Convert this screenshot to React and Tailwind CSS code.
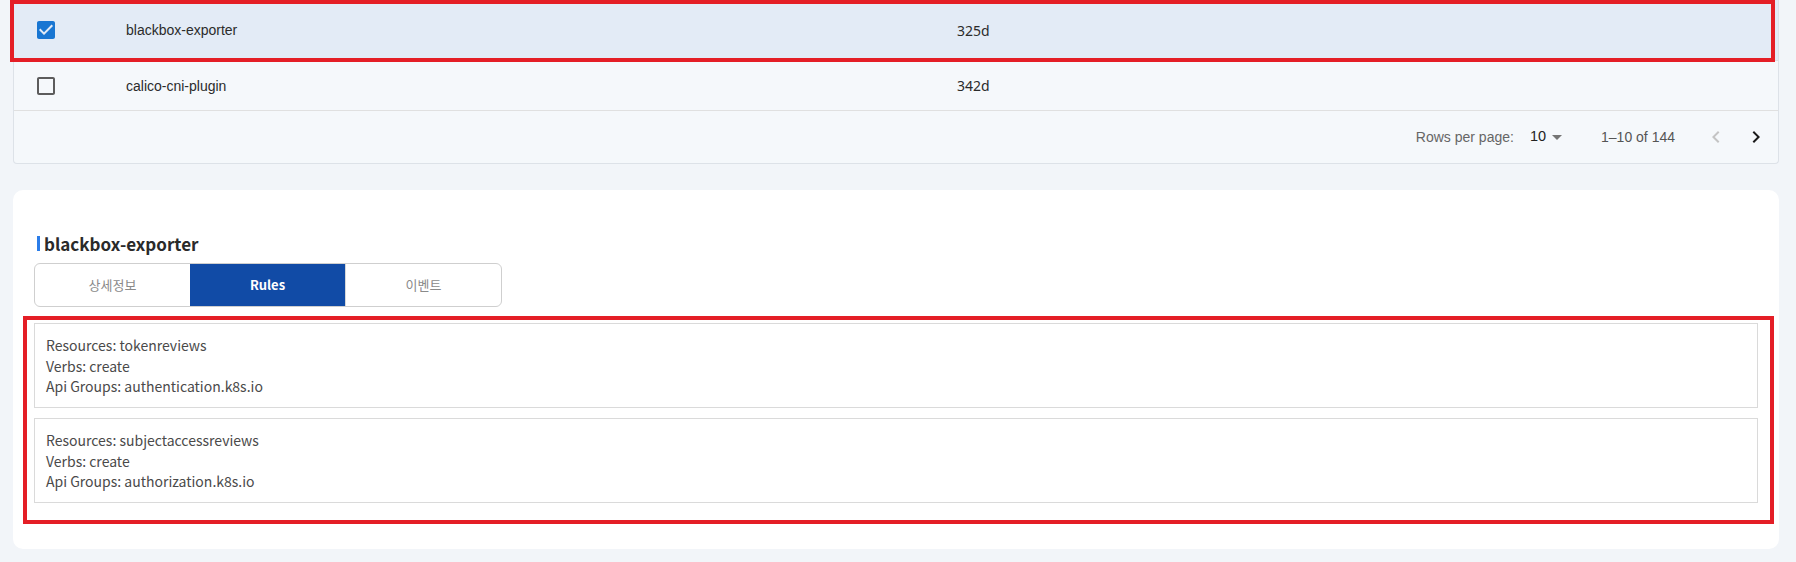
import React from "react";

const rows = [
  { name: "blackbox-exporter", age: "325d", checked: true },
  { name: "calico-cni-plugin", age: "342d", checked: false },
];

const rules = [
  { resources: "tokenreviews", verbs: "create", groups: "authentication.k8s.io" },
  { resources: "subjectaccessreviews", verbs: "create", groups: "authorization.k8s.io" },
];

function CheckBox({ checked }) {
  return checked ? (
    <svg viewBox="0 0 24 24" className="w-6 h-6 fill-[#1976d2]">
      <path d="M19 3H5c-1.11 0-2 .9-2 2v14c0 1.1.89 2 2 2h14c1.11 0 2-.9 2-2V5c0-1.1-.89-2-2-2zm-9 14l-5-5 1.41-1.41L10 14.17l7.59-7.59L19 8l-9 9z" />
    </svg>
  ) : (
    <svg viewBox="0 0 24 24" className="w-6 h-6 fill-[#5c5c5c]">
      <path d="M19 5v14H5V5h14m0-2H5c-1.1 0-2 .9-2 2v14c0 1.1.9 2 2 2h14c1.1 0 2-.9 2-2V5c0-1.1-.9-2-2-2z" />
    </svg>
  );
}

export default function App() {
  return (
    <div className="w-full h-[562px] overflow-hidden bg-[#f2f5f9] pl-[13px] pr-[17px] font-['Liberation_Sans',Arial,sans-serif]">
      <div className="relative">
        {/* table */}
        <div className="border-x border-b border-[#dde2e8] rounded-b-[4px] bg-[#f5f8fb]">
          {rows.map((r) => (
            <div
              key={r.name}
              className={`flex items-center border-b border-[#e0e0e0] ${r.checked ? "h-[61px] bg-[#e3ebf6]" : "h-[50px]"}`}
            >
              <div className="w-[112px] pl-[20px] flex items-center">
                <CheckBox checked={r.checked} />
              </div>
              <div className="w-[831px] text-[14px] text-[#2b2b2b] pt-[1px]">{r.name}</div>
              <div className="text-[14px] text-[#2b2b2b] font-['Noto_Sans',sans-serif]">{r.age}</div>
            </div>
          ))}
          <div className="h-[52px] flex items-center justify-end pr-[2px] text-[14px]">
            <span className="text-[#666]">Rows per page:</span>
            <div className="ml-[16px] flex items-center">
              <span className="text-[#222] text-[14.5px]">10</span>
              <svg viewBox="0 0 24 24" className="w-6 h-6 fill-[#757575] -ml-[1px]">
                <path d="M7 10l5 5 5-5z" />
              </svg>
            </div>
            <span className="ml-[32px] text-[#555]">1–10 of 144</span>
            <div className="ml-[21px] flex">
              <div className="w-10 h-10 flex items-center justify-center">
                <svg viewBox="0 0 24 24" className="w-6 h-6 fill-[#c4c4c4]">
                  <path d="M15.41 16.59L10.83 12l4.58-4.59L14 6l-6 6 6 6 1.41-1.41z" />
                </svg>
              </div>
              <div className="w-10 h-10 flex items-center justify-center">
                <svg viewBox="0 0 24 24" className="w-6 h-6 fill-[#1a1a1a]">
                  <path d="M8.59 16.59L13.17 12 8.59 7.41 10 6l6 6-6 6-1.41-1.41z" />
                </svg>
              </div>
            </div>
          </div>
        </div>
        <div className="absolute left-[-3px] right-[4px] top-0 h-[62px] border-[4px] border-[#e41e26] pointer-events-none" />

        {/* detail */}
        <div className="relative mt-[26px] bg-white rounded-[10px] h-[359px] px-[21px] pt-[43px] font-['Noto_Sans_CJK_KR','Noto_Sans',sans-serif]">
          <div className="flex items-center pl-[3px] h-[20px]">
            <span className="w-[3px] h-[15px] bg-[#2b7de9] mr-[4px]" />
            <span className="text-[17px] font-bold text-[#2a2a2a] leading-none">blackbox-exporter</span>
          </div>
          <div className="mt-[10px] flex w-[468px] h-[44px] border border-[#cfcfcf] rounded-[6px] overflow-hidden text-[13px]">
            <div className="flex-1 flex items-center justify-center text-[#8a8a8a]">상세정보</div>
            <div className="flex-1 flex items-center justify-center bg-[#114ba6] text-white font-bold">Rules</div>
            <div className="flex-1 flex items-center justify-center text-[#8a8a8a] border-l border-[#d8d8d8]">이벤트</div>
          </div>
          <div className="mt-[16px] flex flex-col gap-[10px]">
            {rules.map((r) => (
              <div key={r.resources} className="h-[85px] border border-[#dadada] pl-[11px] pt-[11px] text-[14px] leading-[20.5px] text-[#4a4a4a]">
                <div>Resources: {r.resources}</div>
                <div>Verbs: {r.verbs}</div>
                <div>Api Groups: {r.groups}</div>
              </div>
            ))}
          </div>
          <div className="absolute left-[10px] right-[5px] top-[126px] h-[208px] border-[4px] border-[#e41e26] pointer-events-none" />
        </div>
      </div>
    </div>
  );
}
